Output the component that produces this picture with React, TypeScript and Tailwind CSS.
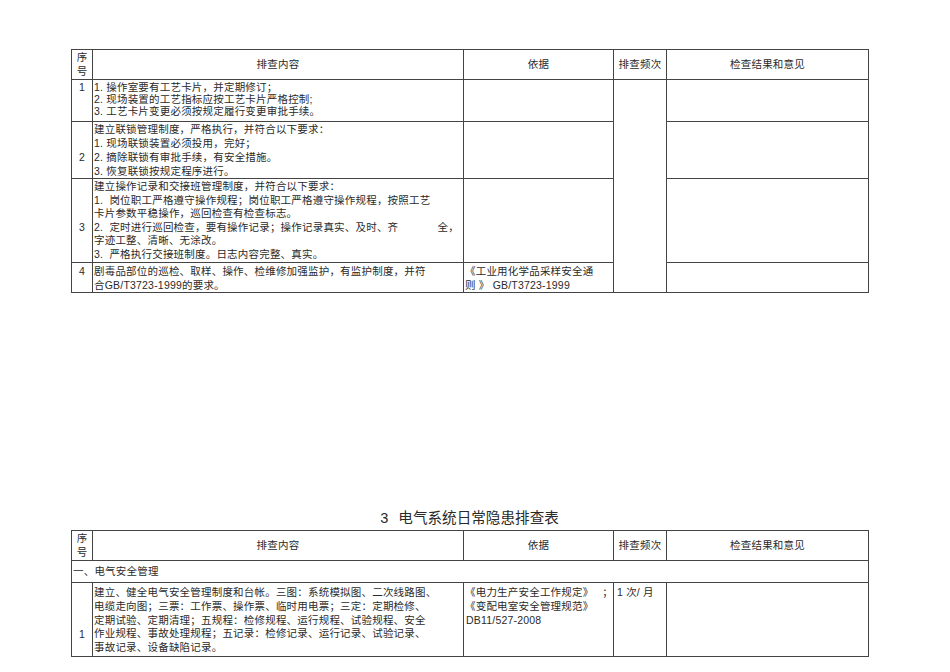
import React from "react";

const B = "border border-[#444]";

function Header() {
  return (
    <tr className="h-[30px]">
      <td className={`${B} p-0 align-middle text-center leading-[13.5px]`}>
        <div>序</div>
        <div>号</div>
      </td>
      <td className={`${B} p-0 align-middle text-center`}>排查内容</td>
      <td className={`${B} p-0 align-middle text-center`}>依据</td>
      <td className={`${B} p-0 align-middle text-center`}>排查频次</td>
      <td className={`${B} p-0 align-middle text-center`}>检查结果和意见</td>
    </tr>
  );
}

function Cols() {
  return (
    <colgroup>
      <col className="w-[21px]" />
      <col className="w-[371px]" />
      <col className="w-[150px]" />
      <col className="w-[53px]" />
      <col className="w-[202px]" />
    </colgroup>
  );
}

export default function App() {
  return (
    <div className="w-[950px] h-[672px] bg-white overflow-hidden text-[#2a2a2a] text-[10.5px] tracking-[0.2px] [font-family:'Liberation_Sans','Noto_Sans_CJK_SC',sans-serif]">
      <div className="pl-[71px] pt-[49px]">
        <table className="border-collapse table-fixed w-[797px]">
          <Cols />
          <tbody>
            <Header />
            <tr className="h-[42px]">
              <td className={`${B} p-0 align-top text-center`}>
                <div className="pt-[1px] leading-[12px]">1</div>
              </td>
              <td className={`${B} p-0 align-top`}>
                <div className="pl-[1px] pt-[1px] leading-[12px]">
                  <div>1. 操作室要有工艺卡片，并定期修订；</div>
                  <div>2. 现场装置的工艺指标应按工艺卡片严格控制;</div>
                  <div>3. 工艺卡片变更必须按规定履行变更审批手续。</div>
                </div>
              </td>
              <td className={`${B} p-0`}></td>
              <td className={`${B} p-0`} rowSpan={4}></td>
              <td className={`${B} p-0`}></td>
            </tr>
            <tr className="h-[57px]">
              <td className={`${B} p-0 align-top text-center`}>
                <div className="pt-[28px] leading-[14px]">2</div>
              </td>
              <td className={`${B} p-0 align-top`}>
                <div className="pl-[1px] pt-0 leading-[14px]">
                  <div>建立联锁管理制度，严格执行，并符合以下要求：</div>
                  <div>1. 现场联锁装置必须投用，完好；</div>
                  <div>2. 摘除联锁有审批手续，有安全措施。</div>
                  <div>3. 恢复联锁按规定程序进行。</div>
                </div>
              </td>
              <td className={`${B} p-0`}></td>
              <td className={`${B} p-0`}></td>
            </tr>
            <tr className="h-[84px]">
              <td className={`${B} p-0 align-top text-center`}>
                <div className="pt-[42px] leading-[13.6px]">3</div>
              </td>
              <td className={`${B} p-0 align-top`}>
                <div className="pl-[1px] pt-[1px] leading-[13.6px] whitespace-pre">
                  <div>建立操作记录和交接班管理制度，并符合以下要求：</div>
                  <div>1.  岗位职工严格遵守操作规程；岗位职工严格遵守操作规程，按照工艺</div>
                  <div>卡片参数平稳操作，巡回检查有检查标志。</div>
                  <div className="flex justify-between pr-[4px]">
                    <span>2.  定时进行巡回检查，要有操作记录；操作记录真实、及时、齐</span>
                    <span>全，</span>
                  </div>
                  <div>字迹工整、清晰、无涂改。</div>
                  <div>3.  严格执行交接班制度。日志内容完整、真实。</div>
                </div>
              </td>
              <td className={`${B} p-0`}></td>
              <td className={`${B} p-0`}></td>
            </tr>
            <tr className="h-[29px]">
              <td className={`${B} p-0 align-top text-center`}>
                <div className="pt-[1px] leading-[14px]">4</div>
              </td>
              <td className={`${B} p-0 align-top`}>
                <div className="pl-[1px] pt-[1px] leading-[14px]">
                  <div>剧毒品部位的巡检、取样、操作、检维修加强监护，有监护制度，并符</div>
                  <div>合GB/T3723-1999的要求。</div>
                </div>
              </td>
              <td className={`${B} p-0 align-top`}>
                <div className="pl-[1px] pt-[1px] leading-[14px] whitespace-pre">
                  <div>《工业用化学品采样安全通</div>
                  <div>则 》 GB/T3723-1999</div>
                </div>
              </td>
              <td className={`${B} p-0`}></td>
            </tr>
          </tbody>
        </table>

        <div className="w-[797px] mt-[215px] mb-[2px] flex justify-center items-center h-[20px] text-[14.6px] leading-[20px] tracking-normal">
          <span>3</span>
          <span className="ml-[10px]">电气系统日常隐患排查表</span>
        </div>

        <table className="border-collapse table-fixed w-[797px]">
          <Cols />
          <tbody>
            <Header />
            <tr className="h-[22px]">
              <td className={`${B} p-0 align-middle`} colSpan={5}>
                <div className="pl-[1px]">一、电气安全管理</div>
              </td>
            </tr>
            <tr className="h-[74px]">
              <td className={`${B} p-0 align-top text-center`}>
                <div className="pt-[45px] leading-[13.8px]">1</div>
              </td>
              <td className={`${B} p-0 align-top`}>
                <div className="pl-[1px] pt-[3px] leading-[13.8px]">
                  <div>建立、健全电气安全管理制度和台帐。三图：系统模拟图、二次线路图、</div>
                  <div>电缆走向图；三票：工作票、操作票、临时用电票；三定：定期检修、</div>
                  <div>定期试验、定期清理；五规程：检修规程、运行规程、试验规程、安全</div>
                  <div>作业规程、事故处理规程；五记录：检修记录、运行记录、试验记录、</div>
                  <div>事故记录、设备缺陷记录。</div>
                </div>
              </td>
              <td className={`${B} p-0 align-top`}>
                <div className="pl-[1px] pt-[3px] leading-[13.8px]">
                  <div className="flex justify-between">
                    <span>《电力生产安全工作规定》</span>
                    <span>；</span>
                  </div>
                  <div>《变配电室安全管理规范》</div>
                  <div className="pl-[1px]">DB11/527-2008</div>
                </div>
              </td>
              <td className={`${B} p-0 align-top`}>
                <div className="pl-[3px] pt-[3px] leading-[13.8px] whitespace-pre">1 次/ 月</div>
              </td>
              <td className={`${B} p-0`}></td>
            </tr>
          </tbody>
        </table>
      </div>
    </div>
  );
}
